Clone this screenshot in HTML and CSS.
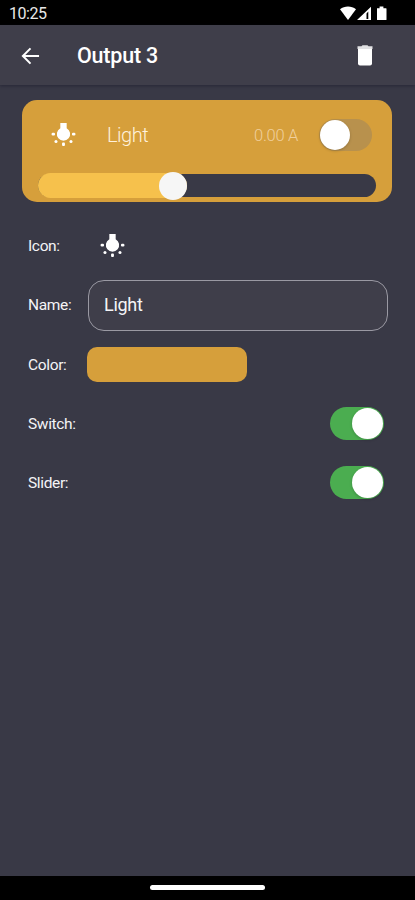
FILE: index.html
```html
<!DOCTYPE html>
<html lang="en">
<head>
<meta charset="utf-8">
<title>Output 3</title>
<link rel="stylesheet" href="styles.css">
</head>
<body>
<svg class="defs" aria-hidden="true">
  <symbol id="bulb" viewBox="0 0 26 26">
    <path d="M9.700 1h6.600v5.500a6.900 6.900 0 1 1-6.600 0z"/>
    <rect x=".6" y="11.300" width="3.600" height="2.800" rx="1.200"/><rect x="21.800" y="11.300" width="3.600" height="2.800" rx="1.200"/>
    <circle cx="5.200" cy="20.300" r="1.600"/><circle cx="20.800" cy="20.300" r="1.600"/>
    <rect x="11.500" y="21.400" width="3" height="3.600" rx="1"/>
  </symbol>
</svg>
<div class="screen">
  <div class="status">
    <span class="time">10:25</span>
    <svg class="status-icons" viewBox="0 0 48 15">
      <path d="M0 3.200C4.500-.4 11.500-.4 16 3.200L8 14z"/>
      <path fill-rule="evenodd" d="M17 14L31 .8V14zM26.500 7.500V13h1.800V5.600z"/>
      <path d="M37 2.200h2.600V.5h3.800v1.700H46q.5 0 .5.500v10.800q0 .5-.5.500h-8.500q-.5 0-.5-.5z"/>
    </svg>
  </div>
  <header class="appbar">
    <svg class="back" viewBox="0 0 20 18"><path d="M19 9H2M10 1L2 9l8 8"/></svg>
    <h1>Output 3</h1>
    <svg class="trash" viewBox="0 0 16 21"><path d="M.5 1.200H4.500L5.500.3h5l1 .9h4v2.900H.5z" opacity=".85"/><path d="M1 4.100h14v14.400q0 2-2 2H3q-2 0-2-2z"/></svg>
  </header>
  <main>
    <section class="card">
      <div class="card-top">
        <svg class="bulb"><use href="#bulb"/></svg>
        <span class="card-name">Light</span>
        <span class="amps">0.00 A</span>
        <span class="switch off"><i></i></span>
      </div>
      <div class="slider"><div class="fill"><i></i></div></div>
    </section>
    <div class="rows">
      <div class="row"><label>Icon:</label><svg class="bulb pick"><use href="#bulb"/></svg></div>
      <div class="row"><label>Name:</label><div class="input">Light</div></div>
      <div class="row"><label>Color:</label><div class="swatch"></div></div>
      <div class="row"><label>Switch:</label><span class="switch on"><i></i></span></div>
      <div class="row"><label>Slider:</label><span class="switch on"><i></i></span></div>
    </div>
  </main>
  <div class="nav"><div class="pill"></div></div>
</div>
</body>
</html>
```
FILE: styles.css
```css
* { box-sizing: border-box; }
body { margin: 0; background: #393946; color: #f4f4f6; font-family: Roboto, sans-serif; }
svg { fill: #fff; display: block; flex: none; }
.defs { position: absolute; width: 0; height: 0; }
.screen { width: 415px; height: 900px; display: flex; flex-direction: column; }
.status { height: 25px; background: #000; display: flex; justify-content: space-between; padding: 6px 27px 0 9px; }
.time { font-size: 16px; line-height: 16px; letter-spacing: -.45px; color: #e8e8e8; }
.status-icons { width: 48px; height: 15px; }
.appbar { height: 60px; background: #3f3e4a; display: flex; align-items: center; padding: 1px 42px 0 21px; box-shadow: 0 1px 3px rgba(20, 20, 40, .5); }
.back { width: 19px; height: 18px; fill: none; stroke: #fff; stroke-width: 2.1; }
h1 { margin: 1px 0 0 37px; font-size: 21.500px; letter-spacing: -.2px; font-weight: 500; line-height: 26px; flex: 1; color: #fff; }
.trash { width: 16px; height: 21px; }
main { flex: 1; padding-top: 15px; }
.card { margin: 0 23px 0 22px; height: 102px; border-radius: 15px; background: #d69f3b; padding: 15px 16px 0; }
.card-top { display: flex; align-items: center; height: 40px; }
.bulb { width: 25px; height: 25px; }
.card-top .bulb { margin: 0 0 1px 13px; }
.card-name { margin-left: 31px; font-size: 20px; letter-spacing: -.5px; font-weight: 300; color: #fff1dc; flex: 1; }
.amps { font-size: 16.500px; letter-spacing: -.3px; font-weight: 300; color: #f0cf9c; margin-right: 21px; }
.switch { display: flex; flex: none; border-radius: 17px; }
.switch i { display: block; border-radius: 50%; background: #fff; box-shadow: 0 1px 3px rgba(0, 0, 0, .2); }
.off { width: 53px; height: 32px; background: #b8914d; margin-right: 4px; padding: 1px; }
.off i { width: 30px; height: 30px; }
.on { width: 54px; height: 33px; background: #4bad50; margin-left: auto; padding: 1px; justify-content: flex-end; }
.on i { width: 31px; height: 31px; }
.slider { margin-top: 19px; height: 23px; width: 338px; border-radius: 12px; background: #393946; display: flex; align-items: center; }
.fill { width: 149px; height: 25px; border-radius: 13px; background: #f6c14c; display: flex; align-items: center; justify-content: flex-end; }
.fill i { width: 28px; height: 28px; flex: none; border-radius: 50%; background: #f6f6f6; }
.rows { padding: 14px 27px 0 28px; }
.row { height: 59.300px; display: flex; align-items: center; }
label { width: 59px; flex: none; font-size: 15.500px; letter-spacing: -.35px; padding-top: 1px; }
.pick { margin-left: 13px; }
.input { width: 300px; flex: none; margin: 1px 0 0 1px; height: 51px; border: 1px solid #9a99a3; border-radius: 16px; background: #3f3e4a; font-size: 18px; letter-spacing: -.3px; line-height: 48px; padding-left: 15px; }
.swatch { width: 160px; height: 35px; border-radius: 10px; background: #d69f3b; }
.row .on { margin-right: 4px; }
.nav { height: 24px; background: #000; display: flex; justify-content: center; padding-top: 9px; }
.pill { width: 115px; height: 5px; border-radius: 3px; background: #fff; }
```
